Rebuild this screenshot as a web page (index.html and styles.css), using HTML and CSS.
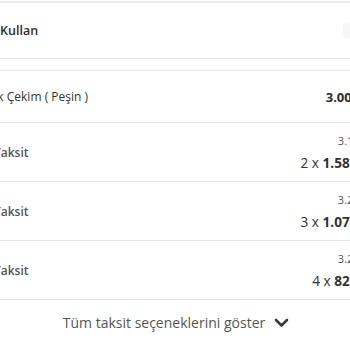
FILE: index.html
```html
<!DOCTYPE html>
<html lang="tr">
<head>
<meta charset="utf-8">
<link rel="stylesheet" href="styles.css">
</head>
<body>
<div class="viewport">
  <div class="panel">
    <div class="use-row">
      <span class="use-label">Kullan</span>
      <span class="use-toggle"></span>
    </div>
    <div class="options">
      <div class="opt-row single">
        <span class="opt-label">Tek Çekim ( Peşin )</span>
        <span class="opt-total-bold">3.000,00 TL</span>
      </div>
      <div class="opt-row">
        <span class="opt-label muted">2 Taksit</span>
        <div class="opt-values">
          <span class="opt-total">3.162,00 TL</span>
          <span class="opt-monthly">2 x <b>1.581,00 TL</b></span>
        </div>
      </div>
      <div class="opt-row">
        <span class="opt-label muted">3 Taksit</span>
        <div class="opt-values">
          <span class="opt-total">3.222,00 TL</span>
          <span class="opt-monthly">3 x <b>1.074,00 TL</b></span>
        </div>
      </div>
      <div class="opt-row">
        <span class="opt-label muted">4 Taksit</span>
        <div class="opt-values">
          <span class="opt-total">3.288,00 TL</span>
          <span class="opt-monthly">4 x <b>822,00 TL</b></span>
        </div>
      </div>
    </div>
    <div class="more-row">
      <span class="more-text">Tüm taksit seçeneklerini göster</span>
      <svg class="chev" width="15" height="10" viewBox="0 0 15 10"><path d="M2 2 L7.5 7.5 L13 2" fill="none" stroke="#3a3a3a" stroke-width="2.6" stroke-linecap="round" stroke-linejoin="round"/></svg>
    </div>
  </div>
</div>
</body>
</html>
```
FILE: styles.css
```css
html, body {
  margin: 0;
  padding: 0;
  background: #ffffff;
}
body {
  font-family: "Open Sans", "Noto Sans", sans-serif;
  color: #333;
}
.viewport {
  width: 350px;
  height: 350px;
  overflow: hidden;
}
.panel {
  width: 412px;
  margin-left: -16px;
  margin-top: 1px;
  border-top: 2px solid #ebebeb;
}
.use-row {
  height: 55px;
  display: flex;
  align-items: center;
  justify-content: space-between;
  padding-left: 16px;
  border-bottom: 1px solid #e8e8e8;
}
.use-label {
  font-size: 12.5px;
  font-weight: 600;
  color: #2e2e2e;
}
.use-toggle {
  width: 53px;
  height: 15px;
  border-radius: 4px;
  background: #f6f6f6;
}
.options {
  margin-top: 11px;
  border-top: 1px solid #e8e8e8;
}
.opt-row {
  height: 58px;
  display: flex;
  align-items: center;
  justify-content: space-between;
  border-bottom: 1px solid #e6e6e6;
}
.opt-row.single {
  height: 51px;
}
.opt-label {
  font-size: 12px;
  color: #333;
}
.opt-label.muted {
  color: #555;
  font-weight: 600;
}
.opt-total-bold {
  font-size: 13px;
  font-weight: 700;
  color: #2b2b2b;
}
.opt-values {
  display: flex;
  flex-direction: column;
  align-items: flex-end;
  line-height: 22px;
}
.opt-total {
  font-size: 11px;
  color: #555;
}
.opt-monthly {
  font-size: 13.6px;
  color: #333;
}
.opt-monthly b {
  font-weight: 700;
}
.more-row {
  display: flex;
  justify-content: center;
  align-items: center;
  gap: 9px;
  padding-right: 28px;
  height: 45px;
}
.more-text {
  font-size: 14px;
  color: #555;
}
.chev {
  display: block;
}
```
